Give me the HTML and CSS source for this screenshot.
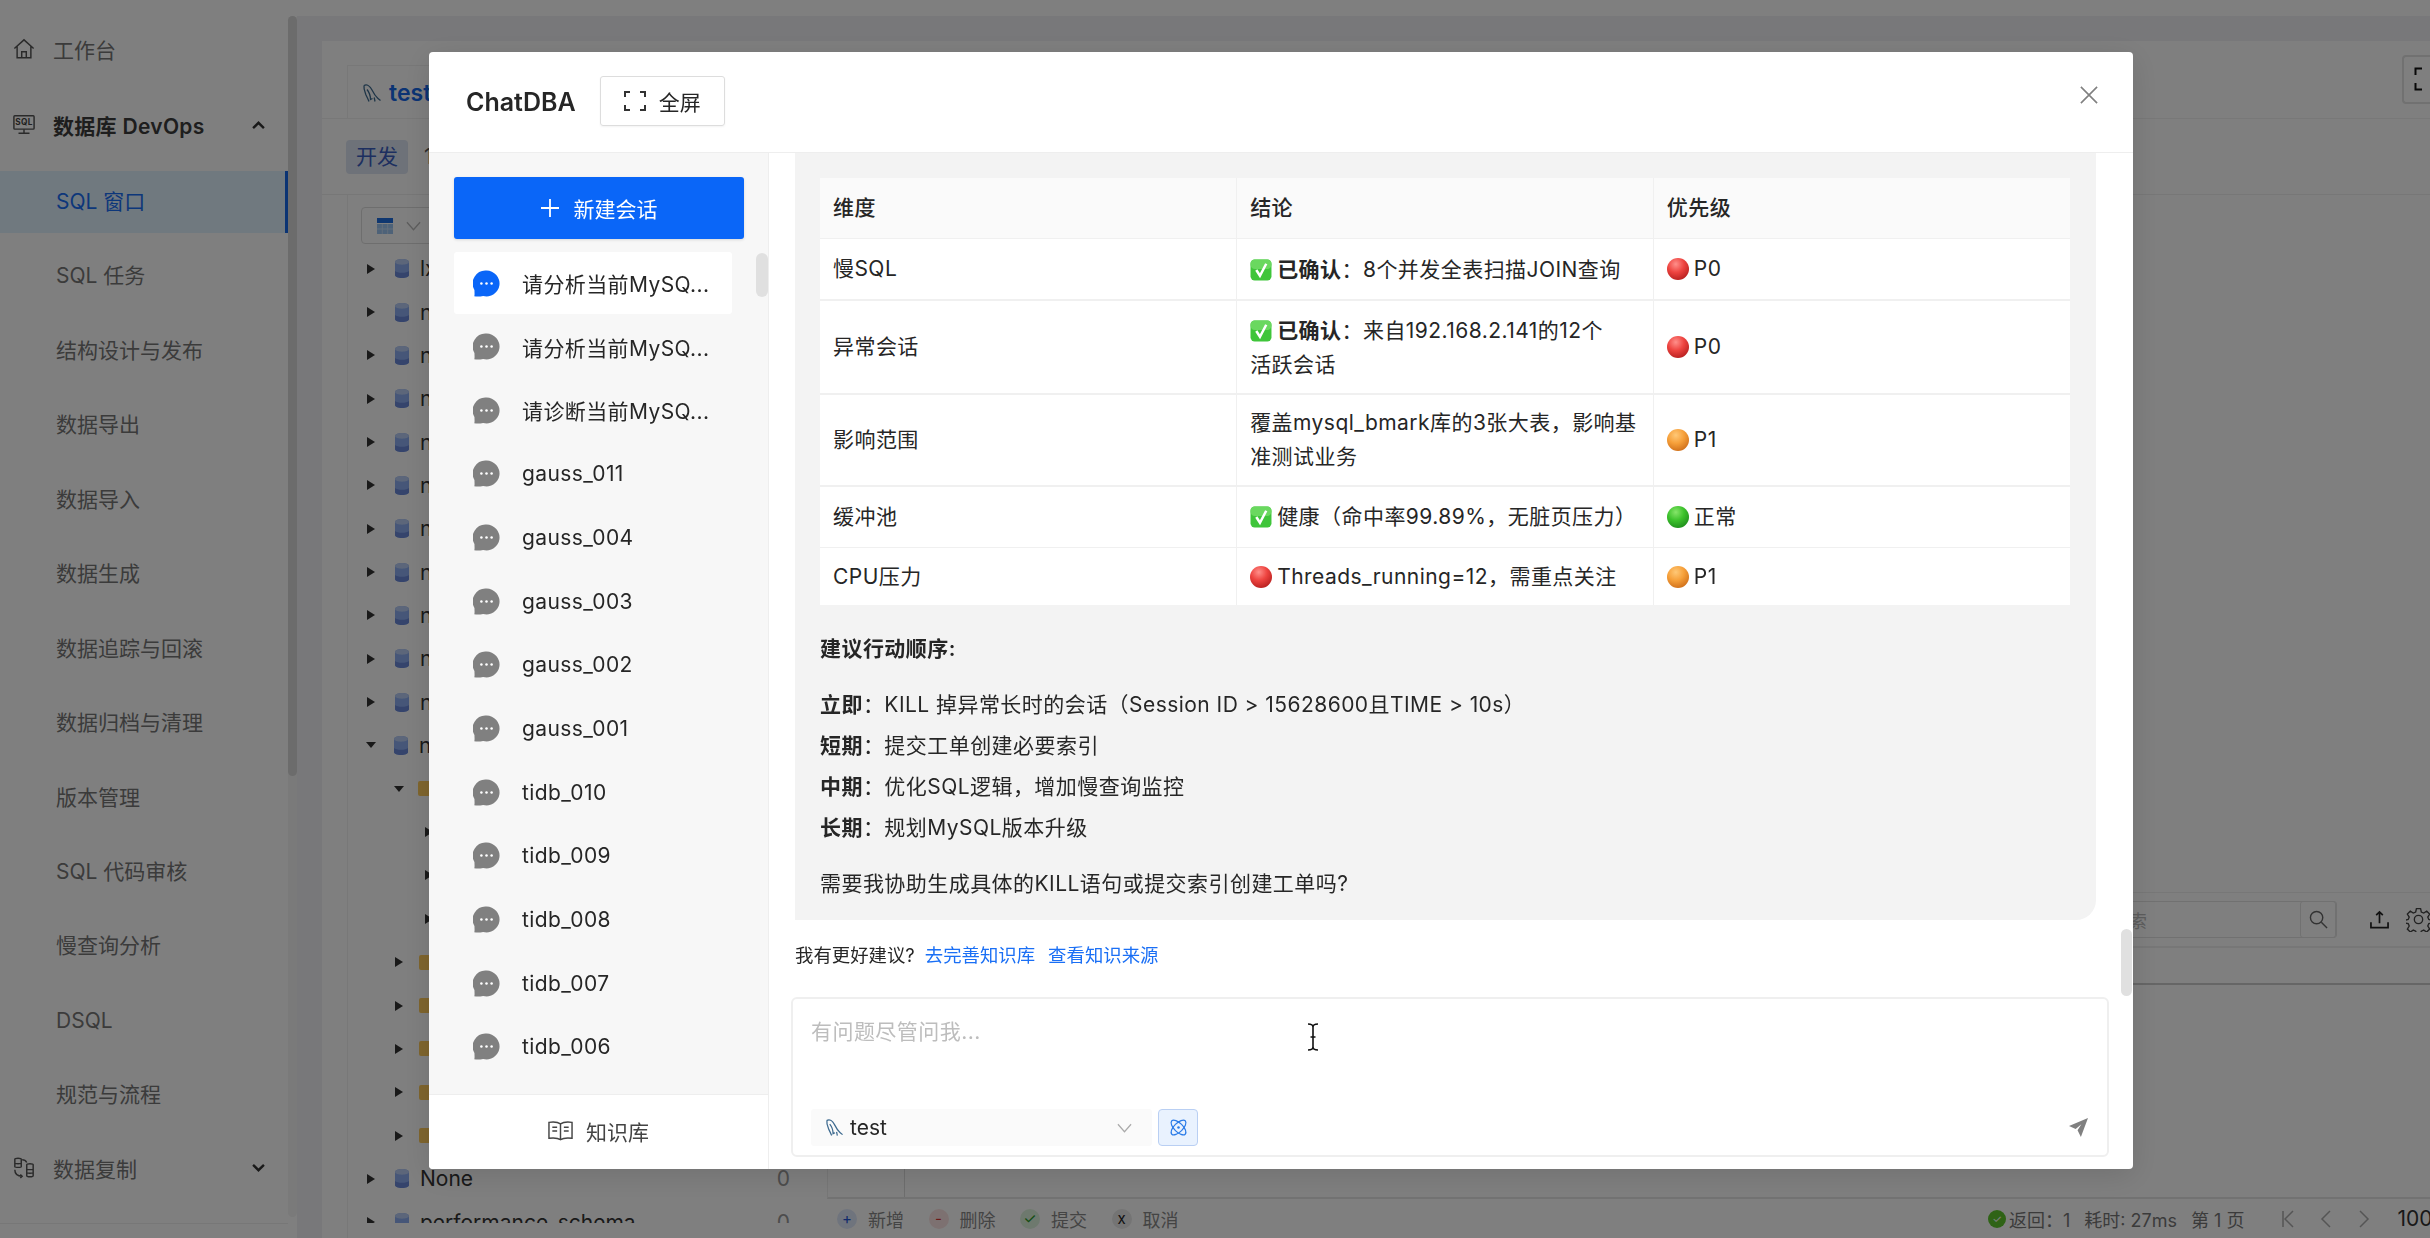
FILE: index.html
```html
<!DOCTYPE html>
<html lang="zh-CN">
<head>
    <meta charset="UTF-8">
    <title>ChatDBA</title>
    <link rel="stylesheet" href="styles.css">
</head>
<body>
    <svg class="defs" width="0" height="0">
        <defs>
            <radialGradient id="redBall" cx="40%" cy="28%" r="75%">
                <stop offset="0" stop-color="#ff8f8a"/><stop offset=".5" stop-color="#ee4440"/><stop offset="1" stop-color="#b8201f"/>
            </radialGradient>
            <radialGradient id="orangeBall" cx="40%" cy="28%" r="75%">
                <stop offset="0" stop-color="#ffc877"/><stop offset=".5" stop-color="#f6a03a"/><stop offset="1" stop-color="#d0701a"/>
            </radialGradient>
            <radialGradient id="greenBall" cx="40%" cy="28%" r="75%">
                <stop offset="0" stop-color="#86e56a"/><stop offset=".5" stop-color="#3dc22c"/><stop offset="1" stop-color="#1f8f1c"/>
            </radialGradient>
        </defs>
        <symbol id="chat" viewBox="0 0 28 28">
            <path fill="currentColor" d="M14 .6a13.4 13.4 0 1 1-3.5 26.3c-2.5.6-6 .8-9.2.4.6-1.5.2-4 .2-6.5A13.4 13.4 0 0 1 14 .6z"/>
            <circle cx="8.7" cy="14" r="1.3" fill="#fff"/><circle cx="14" cy="14" r="1.3" fill="#fff"/><circle cx="19.3" cy="14" r="1.3" fill="#fff"/>
        </symbol>
        <symbol id="dolphin" viewBox="0 0 20 20">
            <path fill="none" stroke="currentColor" stroke-width="1.3" d="M2 2.5C5 1 8 3 10 7c1.5 3 3 6 6 8.5l2.5 2M2 2.5C1.5 6 3 9 4 12c1 2 2 4 3 6.5M5 6.5C7 9 8.5 12 8.5 16.5l2-1M13 18.5l-.8-4"/>
        </symbol>
        <symbol id="db" viewBox="0 0 14 19">
            <path fill="#8cacf0" d="M0 3c0-4 14-4 14 0v13c0 4-14 4-14 0z"/>
            <path fill="#b8cdf5" d="M0 3c0-4 14-4 14 0 0 3.5-14 3.5-14 0z"/>
            <path fill="#6a88d8" d="M0 12c2 2.4 12 2.4 14 0v4c0 4-14 4-14 0z"/>
        </symbol>
        <symbol id="ok" viewBox="0 0 21 21">
            <rect x=".5" y=".5" width="20" height="20" rx="4" fill="#3fc53a"/>
            <rect x=".5" y=".5" width="20" height="9" rx="4" fill="#6ad85f"/>
            <path fill="none" stroke="#fff" stroke-width="2.4" d="M6 10.5l3.5 5.5L15.5 4.5"/>
        </symbol>
        <symbol id="red" viewBox="0 0 21 21"><circle cx="10.5" cy="10.5" r="10.5" fill="url(#redBall)"/></symbol>
        <symbol id="orange" viewBox="0 0 21 21"><circle cx="10.5" cy="10.5" r="10.5" fill="url(#orangeBall)"/></symbol>
        <symbol id="green" viewBox="0 0 21 21"><circle cx="10.5" cy="10.5" r="10.5" fill="url(#greenBall)"/></symbol>
    </svg>

    <div class="topbar"></div>
    <div class="shell">
        <aside class="side">
            <nav class="nav">
                <div class="nav-head first">
                    <svg class="nav-ico" viewBox="0 0 24 24"><path d="M1.5 11.5L12 2l10.5 9.5M4.5 9v12.5h15V9M9.5 21.5V15h5v6.5"/></svg>
                    <span>工作台</span>
                </div>
                <div class="nav-head open">
                    <svg class="nav-ico" viewBox="0 0 24 24"><rect x="1" y="2" width="22" height="14.5" rx="1"/><path d="M12 16.5v4M6 21h12"/><text x="12" y="12.5" class="sql-mark">SQL</text></svg>
                    <span>数据库 DevOps</span>
                    <svg class="nav-caret" viewBox="0 0 12 8"><path d="M1 6.5l5-5 5 5"/></svg>
                </div>
                <div class="nav-item active">SQL 窗口</div>
                <div class="nav-item">SQL 任务</div>
                <div class="nav-item">结构设计与发布</div>
                <div class="nav-item">数据导出</div>
                <div class="nav-item">数据导入</div>
                <div class="nav-item">数据生成</div>
                <div class="nav-item">数据追踪与回滚</div>
                <div class="nav-item">数据归档与清理</div>
                <div class="nav-item">版本管理</div>
                <div class="nav-item">SQL 代码审核</div>
                <div class="nav-item">慢查询分析</div>
                <div class="nav-item">DSQL</div>
                <div class="nav-item">规范与流程</div>
                <div class="nav-head last">
                    <svg class="nav-ico" viewBox="0 0 24 24"><path d="M2 2.5c0-1.5 7-1.5 7 0v8c0 1-7 1-7 0zM2 6.5c0 1 7 1 7 0M15 8.5c0-1.5 7-1.5 7 0v12c0 1.5-7 1.5-7 0zM15 13c0 1 7 1 7 0M15 17c0 1 7 1 7 0M2 14c0 5 3 7 8 7M8 19l2 2-2 2M10 3c3 0 4 1 5 3"/></svg>
                    <span>数据复制</span>
                    <svg class="nav-caret" viewBox="0 0 12 8"><path d="M1 1.5l5 5 5-5"/></svg>
                </div>
            </nav>
            <div class="side-track"><div class="side-thumb"></div></div>
        </aside>

        <main class="main">
            <div class="work">
                <div class="conn-bar">
                    <div class="conn-tab">
                        <svg class="conn-ico"><use href="#dolphin"/></svg>
                        <span>test</span>
                    </div>
                    <div class="full-btn">
                        <svg viewBox="0 0 9 24"><path d="M8 1.5H1.5V8M1.5 16v6.5H8"/></svg>
                    </div>
                </div>
                <div class="env-bar">
                    <span class="env-tag">开发</span>
                    <span class="env-num">1</span>
                </div>
                <div class="work-body">
                    <section class="tree-col">
                        <div class="tree-pick">
                            <svg class="tree-pick-ico" viewBox="0 0 16 16">
                                <rect width="16" height="5" fill="#1f6fe0"/>
                                <rect y="6" width="16" height="10" fill="#9cc4f0"/>
                                <path d="M5.3 6v10M10.7 6v10M0 11h16" stroke="#c6dcf5"/>
                            </svg>
                            <svg class="tree-pick-caret" viewBox="0 0 16 10"><path d="M1 1l7 8 7-8"/></svg>
                        </div>
                        <div class="tree">
                            <div class="row"><i class="arr"></i><svg class="db"><use href="#db"/></svg><span>lx</span></div>
                            <div class="row"><i class="arr"></i><svg class="db"><use href="#db"/></svg><span>n</span></div>
                            <div class="row"><i class="arr"></i><svg class="db"><use href="#db"/></svg><span>n</span></div>
                            <div class="row"><i class="arr"></i><svg class="db"><use href="#db"/></svg><span>n</span></div>
                            <div class="row"><i class="arr"></i><svg class="db"><use href="#db"/></svg><span>n</span></div>
                            <div class="row"><i class="arr"></i><svg class="db"><use href="#db"/></svg><span>n</span></div>
                            <div class="row"><i class="arr"></i><svg class="db"><use href="#db"/></svg><span>n</span></div>
                            <div class="row"><i class="arr"></i><svg class="db"><use href="#db"/></svg><span>n</span></div>
                            <div class="row"><i class="arr"></i><svg class="db"><use href="#db"/></svg><span>n</span></div>
                            <div class="row"><i class="arr"></i><svg class="db"><use href="#db"/></svg><span>n</span></div>
                            <div class="row"><i class="arr"></i><svg class="db"><use href="#db"/></svg><span>n</span></div>
                            <div class="row"><i class="arr down"></i><svg class="db"><use href="#db"/></svg><span>n</span></div>
                            <div class="row lv1"><i class="arr down"></i><b class="folder"></b></div>
                            <div class="row lv2"><i class="arr"></i></div>
                            <div class="row lv2"><i class="arr"></i></div>
                            <div class="row lv2"><i class="arr"></i></div>
                            <div class="row lv1"><i class="arr"></i><b class="folder"></b></div>
                            <div class="row lv1"><i class="arr"></i><b class="folder"></b></div>
                            <div class="row lv1"><i class="arr"></i><b class="folder"></b></div>
                            <div class="row lv1"><i class="arr"></i><b class="folder"></b></div>
                            <div class="row lv1"><i class="arr"></i><b class="folder"></b></div>
                            <div class="row"><i class="arr"></i><svg class="db"><use href="#db"/></svg><span>None</span><em>0</em></div>
                            <div class="row"><i class="arr"></i><svg class="db"><use href="#db"/></svg><span>performance_schema</span><em>0</em></div>
                        </div>
                    </section>

                    <section class="res-col">
                        <div class="editor"></div>
                        <div class="res-bar">
                            <div class="search">
                                <span class="search-ph">搜索</span>
                                <span class="search-btn">
                                    <svg viewBox="0 0 20 20"><circle cx="8" cy="8" r="6.5"/><path d="M13 13l6 6"/></svg>
                                </span>
                            </div>
                            <svg class="bar-ico" viewBox="0 0 20 20"><path d="M10 14V2M6.5 5.5L10 2l3.5 3.5M1 13v5.5h18V13"/></svg>
                            <svg class="bar-ico gear" viewBox="0 0 24 24"><circle cx="12" cy="12" r="4"/><path d="M10 1.5h4l.7 3.3 2.3 1 2.9-1.8 2.8 2.8-1.8 2.9 1 2.3 3.3.7v2.6l-3.3.7-1 2.3 1.8 2.9-2.8 2.8-2.9-1.8-2.3 1-.7 2.3h-4l-.7-2.3-2.3-1-2.9 1.8-2.8-2.8 1.8-2.9-1-2.3-3.3-.7v-2.6l3.3-.7 1-2.3-1.8-2.9 2.8-2.8 2.9 1.8 2.3-1z"/></svg>
                        </div>
                        <div class="res-head"></div>
                        <div class="res-grid"><div class="res-gutter"></div></div>
                        <div class="res-foot">
                            <div class="foot-acts">
                                <span class="act"><i class="act-dot add">+</i>新增</span>
                                <span class="act"><i class="act-dot del">-</i>删除</span>
                                <span class="act"><i class="act-dot sub">✓</i>提交</span>
                                <span class="act"><i class="act-dot off">x</i>取消</span>
                            </div>
                            <div class="foot-stat">
                                <i class="stat-ok">✓</i>
                                <span>返回：1</span>
                                <span>耗时: 27ms</span>
                                <span>第 1 页</span>
                                <svg class="pager first-page" viewBox="0 0 14 18"><path d="M2 1v16M12 1L4 9l8 8"/></svg>
                                <svg class="pager" viewBox="0 0 14 18"><path d="M11 1L3 9l8 8"/></svg>
                                <svg class="pager" viewBox="0 0 14 18"><path d="M3 1l8 8-8 8"/></svg>
                                <span class="page-size">100</span>
                            </div>
                        </div>
                    </section>
                </div>
            </div>
        </main>
    </div>

    <div class="mask"></div>

    <div class="modal">
        <div class="modal-head">
            <span class="modal-title">ChatDBA</span>
            <div class="screen-btn">
                <svg viewBox="0 0 22 20"><path d="M1 6V1h5M16 1h5v5M1 14v5h5M16 19h5v-5"/></svg>
                <span>全屏</span>
            </div>
            <svg class="modal-close" viewBox="0 0 20 20"><path d="M1 1l18 18M19 1L1 19"/></svg>
        </div>
        <div class="modal-body">
            <div class="chats">
                <div class="new-chat">
                    <svg viewBox="0 0 18 18"><path d="M9 0v18M0 9h18"/></svg>
                    <span>新建会话</span>
                </div>
                <div class="chat-list">
                    <div class="chat-item current"><svg><use href="#chat"/></svg><span>请分析当前MySQ...</span></div>
                    <div class="chat-item"><svg><use href="#chat"/></svg><span>请分析当前MySQ...</span></div>
                    <div class="chat-item"><svg><use href="#chat"/></svg><span>请诊断当前MySQ...</span></div>
                    <div class="chat-item"><svg><use href="#chat"/></svg><span>gauss_011</span></div>
                    <div class="chat-item"><svg><use href="#chat"/></svg><span>gauss_004</span></div>
                    <div class="chat-item"><svg><use href="#chat"/></svg><span>gauss_003</span></div>
                    <div class="chat-item"><svg><use href="#chat"/></svg><span>gauss_002</span></div>
                    <div class="chat-item"><svg><use href="#chat"/></svg><span>gauss_001</span></div>
                    <div class="chat-item"><svg><use href="#chat"/></svg><span>tidb_010</span></div>
                    <div class="chat-item"><svg><use href="#chat"/></svg><span>tidb_009</span></div>
                    <div class="chat-item"><svg><use href="#chat"/></svg><span>tidb_008</span></div>
                    <div class="chat-item"><svg><use href="#chat"/></svg><span>tidb_007</span></div>
                    <div class="chat-item"><svg><use href="#chat"/></svg><span>tidb_006</span></div>
                </div>
                <div class="chats-thumb"></div>
                <div class="kb">
                    <svg viewBox="0 0 26 22"><path d="M13 3.5C10 1.5 5 1.5 1 2v16.5c4-.5 9-.5 12 1.5 3-2 8-2 12-1.5V2c-4-.5-9-.5-12 1.5zM13 3.5V20M4.5 7h5M4.5 11h5M16.5 7h5M16.5 11h5"/></svg>
                    <span>知识库</span>
                </div>
            </div>

            <div class="talk">
                <div class="bubble">
                    <table class="sum">
                        <tr><th>维度</th><th>结论</th><th>优先级</th></tr>
                        <tr class="thick">
                            <td>慢SQL</td>
                            <td><svg class="emo"><use href="#ok"/></svg><strong>已确认</strong><span class="fc">：</span>8个并发全表扫描JOIN查询</td>
                            <td><svg class="emo"><use href="#red"/></svg>P0</td>
                        </tr>
                        <tr class="thick two">
                            <td>异常会话</td>
                            <td><svg class="emo"><use href="#ok"/></svg><strong>已确认</strong><span class="fc">：</span>来自192.168.2.141的12个<br>活跃会话</td>
                            <td><svg class="emo"><use href="#red"/></svg>P0</td>
                        </tr>
                        <tr class="thick two">
                            <td>影响范围</td>
                            <td>覆盖mysql_bmark库的3张大表，影响基<br>准测试业务</td>
                            <td><svg class="emo"><use href="#orange"/></svg>P1</td>
                        </tr>
                        <tr class="roomy">
                            <td>缓冲池</td>
                            <td><svg class="emo"><use href="#ok"/></svg>健康（命中率99.89%，无脏页压力）</td>
                            <td><svg class="emo"><use href="#green"/></svg>正常</td>
                        </tr>
                        <tr>
                            <td>CPU压力</td>
                            <td><svg class="emo"><use href="#red"/></svg>Threads_running=12，需重点关注</td>
                            <td><svg class="emo"><use href="#orange"/></svg>P1</td>
                        </tr>
                    </table>
                    <p class="steps-title">建议行动顺序:</p>
                    <ul class="steps">
                        <li><strong>立即</strong><span class="fc">：</span>KILL 掉异常长时的会话（Session ID &gt; 15628600且TIME &gt; 10s）</li>
                        <li><strong>短期</strong><span class="fc">：</span>提交工单创建必要索引</li>
                        <li><strong>中期</strong><span class="fc">：</span>优化SQL逻辑，增加慢查询监控</li>
                        <li><strong>长期</strong><span class="fc">：</span>规划MySQL版本升级</li>
                    </ul>
                    <p class="closing">需要我协助生成具体的KILL语句或提交索引创建工单吗?</p>
                </div>
                <div class="hint">
                    <span>我有更好建议?</span>
                    <a>去完善知识库</a>
                    <a>查看知识来源</a>
                </div>
                <div class="ask">
                    <div class="ask-ph">有问题尽管问我...</div>
                    <div class="ask-foot">
                        <div class="db-pick">
                            <svg class="db-pick-ico"><use href="#dolphin"/></svg>
                            <span>test</span>
                            <svg class="db-pick-caret" viewBox="0 0 16 10"><path d="M1 1l7 8 7-8"/></svg>
                        </div>
                        <div class="atom-btn">
                            <svg viewBox="0 0 24 24">
                                <ellipse cx="12" cy="12" rx="5.5" ry="12" transform="rotate(-45 12 12)"/>
                                <ellipse cx="12" cy="12" rx="5.5" ry="12" transform="rotate(45 12 12)"/>
                                <circle class="atom-core" cx="12" cy="12" r="1.6"/>
                            </svg>
                        </div>
                        <svg class="send" viewBox="0 0 20 20"><path d="M20 0L0 8.5l7 3.2 6-5.2-4 6.5L12.5 20z"/></svg>
                    </div>
                </div>
            </div>
        </div>
        <div class="talk-thumb"></div>
        <svg class="ibeam" viewBox="0 0 12 28"><path d="M1 1c3 0 5 1 5 3v20c0 2-2 3-5 3M11 1C8 1 6 2 6 4v20c0 2 2 3 5 3M3.5 14h5"/></svg>
    </div>
</body>
</html>
```

FILE: styles.css
```css
* {
    margin: 0;
    padding: 0;
    box-sizing: border-box;
}

html, body {
    width: 2430px;
    height: 1238px;
    overflow: hidden;
}

body {
    font-family: Inter, "Noto Sans CJK SC", sans-serif;
    font-size: 21px;
    color: #262626;
    background: #fff;
}

.defs {
    position: absolute;
}

.topbar {
    height: 16px;
    background: #fff;
}

.shell {
    display: flex;
    height: 1222px;
}

/* left menu */
.side {
    width: 297px;
    display: flex;
    background: #fff;
}

.nav {
    width: 288px;
    height: 1208px;
    border-bottom: 1px solid #eee;
    padding-top: 2px;
    color: #767676;
}

.nav-head {
    height: 62px;
    display: flex;
    align-items: center;
    padding-left: 13px;
    margin-bottom: 14px;
}

.nav-head span {
    margin-left: 18px;
}

.nav-head.open {
    margin-bottom: 15px;
    font-weight: 600;
    color: #3c3c3c;
    letter-spacing: 0.3px;
}

.nav-head.last {
    margin-top: -2px;
}

.nav-ico {
    width: 22px;
    height: 22px;
    fill: none;
    stroke: #555;
    stroke-width: 1.6;
    flex: none;
}

.sql-mark {
    font-size: 9px;
    font-weight: 700;
    text-anchor: middle;
    stroke: none;
    fill: #444;
}

.nav-caret {
    width: 13px;
    height: 9px;
    margin-left: auto;
    margin-right: 23px;
    fill: none;
    stroke: #333;
    stroke-width: 2.2;
}

.nav-item {
    height: 62px;
    line-height: 62px;
    padding-left: 56px;
    margin-bottom: 12.45px;
}

.nav-item.active {
    background: #e1f2ff;
    color: #1a6ef5;
    border-right: 3px solid #1668e8;
}

.side-track {
    width: 9px;
    height: 1201px;
    background: #f4f4f4;
    border-radius: 5px;
}

.side-thumb {
    height: 760px;
    background: #d8d8d8;
    border-radius: 5px;
}

/* page behind the dialog */
.main {
    flex: 1;
    background: #f0f0f4;
    padding: 25px 0 0 25px;
    min-width: 0;
}

.work {
    height: 100%;
    background: #fff;
    display: flex;
    flex-direction: column;
    overflow: hidden;
}

.conn-bar {
    height: 78px;
    flex: none;
    display: flex;
    justify-content: space-between;
    border-bottom: 1px solid #f0f0f0;
    padding: 24px 0 0 25px;
}

.conn-tab {
    display: flex;
    align-items: center;
    gap: 7px;
    padding: 0 0 0 14px;
    border-left: 1px solid #f0f0f0;
    border-top: 1px solid #f0f0f0;
    height: 54px;
    color: #1668e8;
    font-weight: 600;
    font-size: 23px;
}

.conn-ico {
    width: 20px;
    height: 20px;
    color: #3d6a8f;
}

.full-btn {
    width: 28px;
    height: 49px;
    margin-top: -10px;
    border: 2px solid #e2e2e2;
    border-right: 0;
    border-radius: 4px 0 0 4px;
    padding: 10px 0 0 10px;
}

.full-btn svg {
    width: 9px;
    height: 24px;
    display: block;
    fill: none;
    stroke: #111;
    stroke-width: 2;
}

.env-bar {
    height: 76px;
    flex: none;
    display: flex;
    align-items: center;
    gap: 16px;
    padding-left: 24px;
    border-bottom: 1px solid #eee;
}

.env-tag {
    width: 62px;
    height: 34px;
    line-height: 34px;
    text-align: center;
    background: #dde4f2;
    color: #3a5ec0;
    border-radius: 4px;
}

.env-num {
    color: #555;
}

.work-body {
    flex: 1;
    display: flex;
    min-height: 0;
}

.tree-col {
    width: 480px;
    flex: none;
    margin-left: 25px;
    padding-left: 13px;
    border-left: 1px solid #f0f0f0;
    display: flex;
    flex-direction: column;
}

.tree-pick {
    width: 200px;
    height: 37px;
    margin-top: 12px;
    border: 1px solid #ddd;
    border-radius: 4px;
    display: flex;
    align-items: center;
    padding-left: 15px;
    gap: 13px;
    flex: none;
}

.tree-pick-ico {
    width: 16px;
    height: 16px;
}

.tree-pick-caret {
    width: 15px;
    height: 10px;
    fill: none;
    stroke: #bbb;
    stroke-width: 1.4;
}

.tree {
    margin-top: 3px;
    flex: 1;
    margin-bottom: 15px;
    overflow: hidden;
    color: #333;
}

.row {
    height: 43.35px;
    display: flex;
    align-items: center;
    padding-left: 6px;
    padding-right: 37px;
}

.row.lv1 {
    padding-left: 34px;
}

.row.lv2 {
    padding-left: 64px;
}

.row span {
    margin-left: 11px;
}

.row em {
    margin-left: auto;
    font-style: normal;
    color: #999;
}

.arr {
    width: 0;
    height: 0;
    margin-right: 20px;
    border-left: 8px solid #333;
    border-top: 5.5px solid transparent;
    border-bottom: 5.5px solid transparent;
    flex: none;
}

.arr.down {
    margin: 0 18px 0 -1px;
    border-left: 5.5px solid transparent;
    border-right: 5.5px solid transparent;
    border-top: 6px solid #333;
    border-bottom: 0;
}

.row.lv1 .arr {
    margin-right: 16px;
}

.row.lv1 .arr.down {
    margin: 0 14px 0 -1px;
}

.db {
    width: 14px;
    height: 19px;
    flex: none;
}

.folder {
    width: 24px;
    height: 15px;
    background: #ffcb5c;
    border-radius: 2px;
    flex: none;
}

.res-col {
    flex: 1;
    min-width: 0;
    display: flex;
    flex-direction: column;
}

.editor {
    flex: 1;
    border-bottom: 1px solid #eee;
}

.res-bar {
    height: 55px;
    flex: none;
    display: flex;
    align-items: center;
    justify-content: flex-end;
    border-bottom: 2px solid #eee;
    overflow: hidden;
}

.search {
    width: 237px;
    height: 37px;
    display: flex;
    justify-content: space-between;
    align-items: center;
    border: 1px solid #e2e2e2;
    border-radius: 3px;
    padding-left: 10px;
    color: #bbb;
    font-size: 18px;
}

.search-btn {
    width: 36px;
    height: 37px;
    border: 1px solid #e2e2e2;
    border-radius: 3px;
    display: flex;
    align-items: center;
    justify-content: center;
}

.search-btn svg {
    width: 19px;
    height: 19px;
    fill: none;
    stroke: #666;
    stroke-width: 1.5;
}

.bar-ico {
    width: 19px;
    height: 19px;
    margin-left: 33px;
    fill: none;
    stroke: #222;
    stroke-width: 1.8;
    flex: none;
}

.bar-ico.gear {
    width: 25px;
    height: 25px;
    margin-left: 17px;
    margin-right: -1px;
    stroke: #444;
    stroke-width: 1.3;
}

.res-head {
    height: 37px;
    flex: none;
    border-bottom: 2px solid #ccc;
}

.res-grid {
    height: 214px;
    flex: none;
    border-bottom: 2px solid #e4e4e4;
    display: flex;
    border-left: 1px solid #eee;
}

.res-gutter {
    width: 77px;
    border-right: 1px solid #ddd;
}

.res-foot {
    height: 39px;
    flex: none;
    display: flex;
    align-items: center;
    font-size: 18px;
    color: #888;
}

.foot-acts {
    display: flex;
    padding-left: 10px;
    gap: 24.5px;
}

.act {
    display: flex;
    align-items: center;
    gap: 11px;
}

.act-dot {
    width: 20px;
    height: 20px;
    line-height: 19px;
    border-radius: 50%;
    text-align: center;
    font-style: normal;
    font-size: 15px;
}

.act-dot.add { background: #dfe8fb; color: #1f55d8; }
.act-dot.del { background: #fbe3e3; color: #d83030; }
.act-dot.sub { background: #ddf3dc; color: #2a9a2a; }
.act-dot.off { background: #e8e8e8; color: #222; }

.foot-stat {
    margin-left: auto;
    width: 442px;
    display: flex;
    align-items: center;
    gap: 14px;
    color: #777;
    overflow: hidden;
    flex: none;
    white-space: nowrap;
}

.stat-ok {
    width: 18px;
    height: 18px;
    line-height: 18px;
    margin-right: -11px;
    border-radius: 50%;
    text-align: center;
    background: #5ec72c;
    color: #fff;
    font-size: 11px;
    font-style: normal;
    flex: none;
}

.pager {
    width: 14px;
    height: 18px;
    margin-left: 10px;
    fill: none;
    stroke: #aaa;
    stroke-width: 1.5;
    flex: none;
}

.pager.first-page {
    margin-left: 23px;
}

.page-size {
    font-size: 21px;
    margin-left: 12px;
    color: #333;
}

.mask {
    position: fixed;
    inset: 0;
    background: rgba(0, 0, 0, 0.5);
}

/* dialog */
.modal {
    position: fixed;
    left: 429px;
    top: 52px;
    width: 1704px;
    height: 1117px;
    background: #fff;
    border-radius: 4px;
    box-shadow: 0 6px 30px rgba(0, 0, 0, 0.12);
    display: flex;
    flex-direction: column;
    overflow: hidden;
}

.modal-head {
    height: 101px;
    flex: none;
    display: flex;
    align-items: center;
    padding-left: 37px;
    padding-bottom: 1px;
    border-bottom: 1px solid #eee;
}

.modal-title {
    font-size: 25px;
    font-weight: 600;
}

.screen-btn {
    width: 125px;
    height: 50px;
    margin-left: 24px;
    margin-top: -2px;
    display: flex;
    align-items: center;
    justify-content: center;
    gap: 13px;
    border: 1px solid #ddd;
    border-radius: 3px;
    box-shadow: 0 1px 2px rgba(0, 0, 0, 0.05);
}

.screen-btn svg {
    width: 22px;
    height: 20px;
    fill: none;
    stroke: #333;
    stroke-width: 2;
}

.modal-close {
    width: 18px;
    height: 18px;
    margin-left: auto;
    margin-right: 35px;
    margin-top: -14px;
    fill: none;
    stroke: #808080;
    stroke-width: 1.8;
}

.modal-body {
    flex: 1;
    display: flex;
    min-height: 0;
}

.chats {
    width: 340px;
    flex: none;
    position: relative;
    background: #f7f7f7;
    border-right: 1px solid #eee;
    display: flex;
    flex-direction: column;
    padding: 24px 0 0 25px;
}

.new-chat {
    width: 290px;
    height: 62px;
    flex: none;
    background: #0a66f8;
    color: #fff;
    border-radius: 3px;
    display: flex;
    align-items: center;
    justify-content: center;
    gap: 15px;
    box-shadow: 0 1px 3px rgba(0, 0, 0, 0.12);
}

.new-chat svg {
    width: 18px;
    height: 18px;
    fill: none;
    stroke: #fff;
    stroke-width: 1.8;
}

.chat-list {
    flex: 1;
    overflow: hidden;
    margin-top: 13px;
}

.chat-item {
    width: 278px;
    height: 62px;
    margin-bottom: 1.67px;
    padding-left: 19px;
    display: flex;
    align-items: center;
    gap: 22px;
    border-radius: 3px;
    letter-spacing: 0.4px;
}

.chat-item svg {
    width: 27px;
    height: 27px;
    color: #808080;
    flex: none;
}

.chat-item.current {
    background: #fff;
}

.chat-item.current svg {
    color: #0a66f8;
}

.chats-thumb {
    position: absolute;
    top: 100px;
    right: 0;
    width: 12px;
    height: 44px;
    background: #e0e0e0;
    border-radius: 6px;
}

.kb {
    height: 75px;
    flex: none;
    margin-left: -25px;
    padding-bottom: 2px;
    background: #fff;
    border-top: 1px solid #eee;
    display: flex;
    align-items: center;
    justify-content: center;
    gap: 13px;
    color: #444;
}

.kb svg {
    width: 25px;
    height: 22px;
    fill: none;
    stroke: #444;
    stroke-width: 1.5;
}

.talk {
    flex: 1;
    min-width: 0;
    padding-left: 26px;
}

.bubble {
    width: 1301px;
    height: 767px;
    background: #f3f3f3;
    border-radius: 0 0 20px 0;
    padding: 25px 26px 0 25px;
    line-height: 34px;
    letter-spacing: 0.45px;
}

.sum {
    width: 1250px;
    table-layout: fixed;
    border-collapse: collapse;
    background: #fff;
}

.sum th, .sum td {
    padding: 12px 13px;
    text-align: left;
    vertical-align: middle;
    border-right: 1px solid #f0f0f0;
    border-bottom: 1px solid #f0f0f0;
}

.sum th {
    padding-top: 13px;
    padding-bottom: 13px;
    background: #fafafa;
    font-weight: 500;
}

.sum tr.thick td {
    border-bottom-width: 2px;
}

.sum tr.two td {
    padding-top: 11px;
    padding-bottom: 11px;
}

.sum tr.roomy td {
    padding-top: 13px;
    padding-bottom: 13px;
}

.sum tr:last-child td {
    border-bottom: 0;
    padding-bottom: 11px;
}

.sum th:last-child, .sum td:last-child {
    border-right: 0;
}

.sum strong, .steps strong, .steps-title {
    font-weight: 600;
}

.fc {
    font-family: "Noto Sans CJK TC", sans-serif;
}

.emo {
    width: 22px;
    height: 22px;
    margin-right: 5px;
    vertical-align: -4px;
}

.steps-title {
    margin-top: 27px;
}

.steps {
    list-style: none;
    margin-top: 20px;
}

.steps li {
    margin-bottom: 5px;
}

.closing {
    margin-top: 22px;
}

.hint {
    height: 34px;
    line-height: 34px;
    margin-top: 18px;
    display: flex;
    font-size: 18.4px;
}

.hint a {
    color: #1a6ff5;
    margin-left: 13px;
}

.hint span {
    margin-right: -3px;
}

.ask {
    width: 1318px;
    height: 160px;
    margin: 25px 0 0 -4px;
    border: 2px solid #efefef;
    border-radius: 6px;
    padding: 16px 19px 9px 18px;
    display: flex;
    flex-direction: column;
    justify-content: space-between;
}

.ask-ph {
    line-height: 34px;
    color: #bdbdbd;
    letter-spacing: 0.45px;
}

.ask-foot {
    display: flex;
    align-items: center;
}

.db-pick {
    width: 341px;
    height: 37px;
    background: #fafafa;
    border-radius: 3px;
    display: flex;
    align-items: center;
    padding-left: 14px;
    gap: 6px;
}

.db-pick-ico {
    width: 19px;
    height: 19px;
    color: #3d6a8f;
}

.db-pick-caret {
    width: 15px;
    height: 10px;
    margin-left: auto;
    margin-right: 20px;
    fill: none;
    stroke: #aaa;
    stroke-width: 1.3;
}

.atom-btn {
    width: 40px;
    height: 37px;
    margin-left: 6px;
    background: #e9f2fe;
    border: 1px solid #b9cff3;
    border-radius: 4px;
    display: flex;
    align-items: center;
    justify-content: center;
}

.atom-btn svg {
    width: 19px;
    height: 19px;
    fill: none;
    stroke: #2a7be8;
    stroke-width: 1.5;
}

.atom-core {
    fill: #2a7be8;
    stroke: none;
}

.send {
    width: 19px;
    height: 19px;
    margin-left: auto;
    fill: #808080;
}

.talk-thumb {
    position: absolute;
    right: 1px;
    top: 877px;
    width: 11px;
    height: 67px;
    background: #e0e0e0;
    border-radius: 6px;
}

.ibeam {
    position: absolute;
    left: 878px;
    top: 971px;
    width: 12px;
    height: 28px;
    fill: none;
    stroke: #111;
    stroke-width: 1.6;
}
```
